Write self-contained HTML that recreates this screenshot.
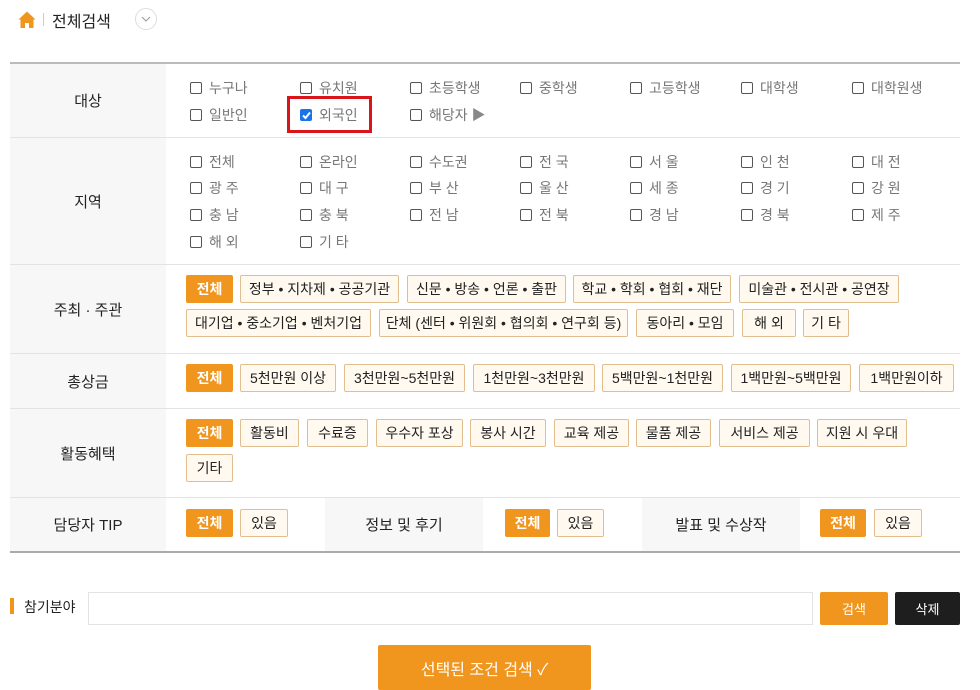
<!DOCTYPE html>
<html><head><meta charset="utf-8"><style>
*{box-sizing:border-box;margin:0;padding:0}
body{width:980px;height:687px;overflow:hidden;background:#fff;font-family:"Liberation Sans","Noto Sans CJK KR",sans-serif;position:relative;color:#333}
.a{position:absolute}
.lab{position:absolute;left:10px;width:156px;background:#f7f7f7;display:flex;align-items:center;justify-content:center;font-size:15px;color:#222}
.hl{position:absolute;left:10px;width:950px;height:1px;background:#e3e3e3}
.cb{position:absolute;font-size:14px;color:#777;line-height:16px;white-space:nowrap;margin-top:1px}
.cb i{display:inline-block;width:12px;height:12px;border:1px solid #555;border-radius:2px;vertical-align:-1px;margin-right:7px}
.b{position:absolute;height:28px;border:1px solid #e2bd8e;background:#fff9f0;font-size:14px;color:#222;display:flex;align-items:center;justify-content:center;border-radius:2px;white-space:nowrap}
.b.o{background:#f0961e;border-color:#f0961e;color:#fff;font-weight:bold}
</style></head><body>
<svg class="a" style="left:18px;top:11px" width="18" height="17" viewBox="0 0 18 17"><path d="M9 0.5 L17.5 8.5 L15.5 8.5 L15.5 17 L11 17 L11 12 L7 12 L7 17 L2.5 17 L2.5 8.5 L0.5 8.5 Z" fill="#f0961e"/></svg>
<div class="a" style="left:43px;top:13px;width:1px;height:13px;background:#ccc"></div>
<div class="a" style="left:52px;top:8px;font-size:16px;color:#222">전체검색</div>
<div class="a" style="left:135px;top:8px;width:22px;height:22px;border:1px solid #ddd;border-radius:50%"></div>
<svg class="a" style="left:141px;top:16px" width="10" height="6"><path d="M1 1 L5 5 L9 1" stroke="#999" fill="none"/></svg>

<div class="a" style="left:10px;top:62px;width:950px;height:2px;background:#bbb"></div>
<div class="lab" style="top:64px;height:73px">대상</div>
<div class="hl" style="top:137px"></div>
<div class="lab" style="top:138px;height:126px">지역</div>
<div class="hl" style="top:264px"></div>
<div class="lab" style="top:265px;height:88px">주최 · 주관</div>
<div class="hl" style="top:353px"></div>
<div class="lab" style="top:354px;height:54px">총상금</div>
<div class="hl" style="top:408px"></div>
<div class="lab" style="top:409px;height:88px">활동혜택</div>
<div class="hl" style="top:497px"></div>
<div class="lab" style="top:498px;height:53px">담당자 TIP</div>
<div class="lab" style="left:325px;width:158px;top:498px;height:53px">정보 및 후기</div>
<div class="lab" style="left:642px;width:158px;top:498px;height:53px">발표 및 수상작</div>
<div class="a" style="left:10px;top:551px;width:950px;height:2px;background:#aaa"></div>

<div class="cb" style="left:190px;top:79px"><i></i>누구나</div>
<div class="cb" style="left:300px;top:79px"><i></i>유치원</div>
<div class="cb" style="left:410px;top:79px"><i></i>초등학생</div>
<div class="cb" style="left:520px;top:79px"><i></i>중학생</div>
<div class="cb" style="left:630px;top:79px"><i></i>고등학생</div>
<div class="cb" style="left:741px;top:79px"><i></i>대학생</div>
<div class="cb" style="left:852px;top:79px"><i></i>대학원생</div>
<div class="cb" style="left:190px;top:106px"><i></i>일반인</div>
<div class="cb" style="left:300px;top:106px"><i style="background:#1a73e8;border-color:#1a73e8;position:relative"><svg style="position:absolute;left:1px;top:1px" width="9" height="9"><path d="M1 4.5 L3.5 7 L8 1.5" stroke="#fff" stroke-width="2" fill="none"/></svg></i>외국인</div>
<div class="a" style="left:287px;top:96px;width:85px;height:37px;border:3px solid #d9141b"></div>
<div class="cb" style="left:410px;top:106px"><i></i>해당자 <span style="color:#888">▶</span></div>

<div class="cb" style="left:190px;top:153px"><i></i>전체</div>
<div class="cb" style="left:300px;top:153px"><i></i>온라인</div>
<div class="cb" style="left:410px;top:153px"><i></i>수도권</div>
<div class="cb" style="left:520px;top:153px"><i></i>전 국</div>
<div class="cb" style="left:630px;top:153px"><i></i>서 울</div>
<div class="cb" style="left:741px;top:153px"><i></i>인 천</div>
<div class="cb" style="left:852px;top:153px"><i></i>대 전</div>
<div class="cb" style="left:190px;top:179px"><i></i>광 주</div>
<div class="cb" style="left:300px;top:179px"><i></i>대 구</div>
<div class="cb" style="left:410px;top:179px"><i></i>부 산</div>
<div class="cb" style="left:520px;top:179px"><i></i>울 산</div>
<div class="cb" style="left:630px;top:179px"><i></i>세 종</div>
<div class="cb" style="left:741px;top:179px"><i></i>경 기</div>
<div class="cb" style="left:852px;top:179px"><i></i>강 원</div>
<div class="cb" style="left:190px;top:206px"><i></i>충 남</div>
<div class="cb" style="left:300px;top:206px"><i></i>충 북</div>
<div class="cb" style="left:410px;top:206px"><i></i>전 남</div>
<div class="cb" style="left:520px;top:206px"><i></i>전 북</div>
<div class="cb" style="left:630px;top:206px"><i></i>경 남</div>
<div class="cb" style="left:741px;top:206px"><i></i>경 북</div>
<div class="cb" style="left:852px;top:206px"><i></i>제 주</div>
<div class="cb" style="left:190px;top:233px"><i></i>해 외</div>
<div class="cb" style="left:300px;top:233px"><i></i>기 타</div>

<div class="b o" style="left:186px;top:275px;width:47px">전체</div>
<div class="b" style="left:240px;top:275px;width:159px">정부 • 지차제 • 공공기관</div>
<div class="b" style="left:407px;top:275px;width:159px">신문 • 방송 • 언론 • 출판</div>
<div class="b" style="left:573px;top:275px;width:158px">학교 • 학회 • 협회 • 재단</div>
<div class="b" style="left:739px;top:275px;width:160px">미술관 • 전시관 • 공연장</div>
<div class="b" style="left:186px;top:309px;width:185px">대기업 • 중소기업 • 벤처기업</div>
<div class="b" style="left:379px;top:309px;width:249px">단체 (센터 • 위원회 • 협의회 • 연구회 등)</div>
<div class="b" style="left:636px;top:309px;width:98px">동아리 • 모임</div>
<div class="b" style="left:742px;top:309px;width:54px">해 외</div>
<div class="b" style="left:803px;top:309px;width:46px">기 타</div>

<div class="b o" style="left:186px;top:364px;width:47px">전체</div>
<div class="b" style="left:240px;top:364px;width:96px">5천만원 이상</div>
<div class="b" style="left:344px;top:364px;width:121px">3천만원~5천만원</div>
<div class="b" style="left:473px;top:364px;width:122px">1천만원~3천만원</div>
<div class="b" style="left:602px;top:364px;width:121px">5백만원~1천만원</div>
<div class="b" style="left:731px;top:364px;width:120px">1백만원~5백만원</div>
<div class="b" style="left:859px;top:364px;width:95px">1백만원이하</div>

<div class="b o" style="left:186px;top:419px;width:47px">전체</div>
<div class="b" style="left:240px;top:419px;width:59px">활동비</div>
<div class="b" style="left:307px;top:419px;width:61px">수료증</div>
<div class="b" style="left:376px;top:419px;width:87px">우수자 포상</div>
<div class="b" style="left:470px;top:419px;width:76px">봉사 시간</div>
<div class="b" style="left:554px;top:419px;width:75px">교육 제공</div>
<div class="b" style="left:636px;top:419px;width:75px">물품 제공</div>
<div class="b" style="left:719px;top:419px;width:91px">서비스 제공</div>
<div class="b" style="left:817px;top:419px;width:90px">지원 시 우대</div>
<div class="b" style="left:186px;top:454px;width:47px">기타</div>

<div class="b o" style="left:186px;top:509px;width:47px">전체</div>
<div class="b" style="left:240px;top:509px;width:48px">있음</div>
<div class="b o" style="left:505px;top:509px;width:45px">전체</div>
<div class="b" style="left:557px;top:509px;width:47px">있음</div>
<div class="b o" style="left:820px;top:509px;width:46px">전체</div>
<div class="b" style="left:874px;top:509px;width:48px">있음</div>

<div class="a" style="left:10px;top:598px;width:4px;height:16px;background:#f0961e"></div>
<div class="a" style="left:24px;top:597px;font-size:14px;color:#222">참기분야</div>
<div class="a" style="left:88px;top:592px;width:725px;height:33px;border:1px solid #e3e3e3"></div>
<div class="a" style="left:820px;top:592px;width:68px;height:33px;background:#f0961e;color:#fff;font-size:13px;display:flex;align-items:center;justify-content:center;border-radius:2px">검색</div>
<div class="a" style="left:895px;top:592px;width:65px;height:33px;background:#1e1e1e;color:#fff;font-size:13px;display:flex;align-items:center;justify-content:center;border-radius:2px">삭제</div>
<div class="a" style="left:378px;top:645px;width:213px;height:45px;background:#f0961e;color:#fff;font-size:16px;display:flex;align-items:center;justify-content:center;border-radius:2px">선택된 조건 검색 ✓</div>
</body></html>
